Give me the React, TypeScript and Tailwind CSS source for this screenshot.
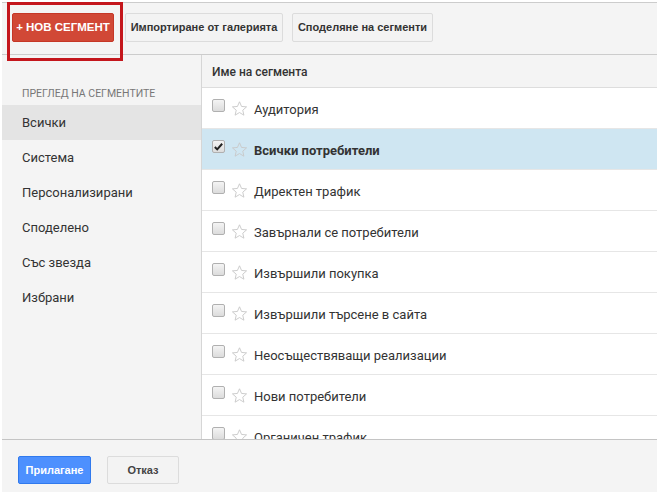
import React from "react";

const Star = () => (
  <svg width="17" height="17" viewBox="0 0 24 24" className="shrink-0">
    <path
      d="M12 2.5l2.9 6.6 7.1.6-5.4 4.7 1.6 7-6.2-3.7-6.2 3.7 1.6-7L2 9.7l7.1-.6z"
      fill="none"
      stroke="#c8c8c8"
      strokeWidth="1.3"
      strokeLinejoin="round"
    />
  </svg>
);

const Check = ({ checked }: { checked?: boolean }) => (
  <div className="w-[13px] h-[13px] mb-[6px] shrink-0 rounded-[2px] border border-[#b0b0b0] bg-gradient-to-b from-[#f4f4f4] to-[#dcdcdc] flex items-center justify-center">
    {checked && (
      <svg width="11" height="11" viewBox="0 0 12 12">
        <path d="M2 6.5l2.6 2.6L10 3" fill="none" stroke="#222" strokeWidth="2.2" />
      </svg>
    )}
  </div>
);

const rows = [
  "Аудитория",
  "Всички потребители",
  "Директен трафик",
  "Завърнали се потребители",
  "Извършили покупка",
  "Извършили търсене в сайта",
  "Неосъществяващи реализации",
  "Нови потребители",
  "Органичен трафик",
];

const side = ["Всички", "Система", "Персонализирани", "Споделено", "Със звезда", "Избрани"];

export default function App() {
  return (
    <div className="w-[661px] h-[497px] bg-white pt-[2px] pl-[2px] relative font-['Roboto',sans-serif]">
      <div className="w-[655px] h-[490px] border-t border-[#cccccc] bg-[#f4f4f4] flex flex-col">
        {/* toolbar */}
        <div className="h-[52px] shrink-0 border-b border-[#cccccc] flex items-start pt-[10px] pl-[10px] font-['Liberation_Sans',Arial,sans-serif]">
          <div className="w-[102px] h-[29px] rounded-[2px] bg-[#d14836] border border-[#c53727] text-white text-[11.5px] font-bold flex items-center justify-center">
            + НОВ СЕГМЕНТ
          </div>
          <div className="ml-[11px] w-[158px] h-[29px] rounded-[2px] bg-[#f3f3f3] border border-[#dcdcdc] text-[#333] text-[11px] font-bold flex items-center justify-center">
            Импортиране от галерията
          </div>
          <div className="ml-[9px] w-[141px] h-[29px] rounded-[2px] bg-[#f3f3f3] border border-[#dcdcdc] text-[#333] text-[11px] font-bold flex items-center justify-center">
            Споделяне на сегменти
          </div>
        </div>
        {/* body */}
        <div className="flex-1 flex overflow-hidden">
          <div className="w-[200px] shrink-0 border-r border-[#d6d6d6] pt-[32px]">
            <div className="pl-[20px] text-[10.5px] text-[#777] leading-[13px] h-[18px]">ПРЕГЛЕД НА СЕГМЕНТИТЕ</div>
            {side.map((s, i) => (
              <div
                key={s}
                className={`h-[35px] flex items-center pl-[20px] pt-[1px] text-[13px] text-[#333] ${i === 0 ? "bg-[#e4e4e4]" : ""}`}
              >
                {s}
              </div>
            ))}
          </div>
          <div className="flex-1 flex flex-col overflow-hidden">
            <div className="h-[33px] shrink-0 border-b border-[#dddddd] flex items-center pl-[10px] pt-[2px] text-[12px] font-medium text-[#333]">
              Име на сегмента
            </div>
            <div className="bg-white flex-1 overflow-hidden">
              {rows.map((r, i) => (
                <div
                  key={r}
                  className={`h-[41px] flex items-center pl-[10px] border-b border-[#e6e6e6] ${i === 1 ? "bg-[#cfe6f2]" : ""}`}
                >
                  <Check checked={i === 1} />
                  <div className="ml-[6px]">
                    <Star />
                  </div>
                  <span className={`ml-[6px] pt-[3px] text-[13px] text-[#333] ${i === 1 ? "font-bold" : ""}`}>{r}</span>
                </div>
              ))}
            </div>
          </div>
        </div>
        {/* footer */}
        <div className="h-[53px] shrink-0 border-t border-[#c4c4c4] flex items-center pl-[16px] pt-[8px] font-['Liberation_Sans',Arial,sans-serif]">
          <div className="w-[73px] h-[28px] rounded-[2px] bg-[#4d90fe] border border-[#3079ed] text-white text-[11px] font-bold flex items-center justify-center">
            Прилагане
          </div>
          <div className="ml-[16px] w-[72px] h-[28px] rounded-[2px] bg-[#f3f3f3] border border-[#dcdcdc] text-[#444] text-[11px] font-bold flex items-center justify-center">
            Отказ
          </div>
        </div>
      </div>
      <div className="absolute left-[7px] top-[2px] w-[116px] h-[59px] border-[3px] border-[#c4161c]" />
    </div>
  );
}
